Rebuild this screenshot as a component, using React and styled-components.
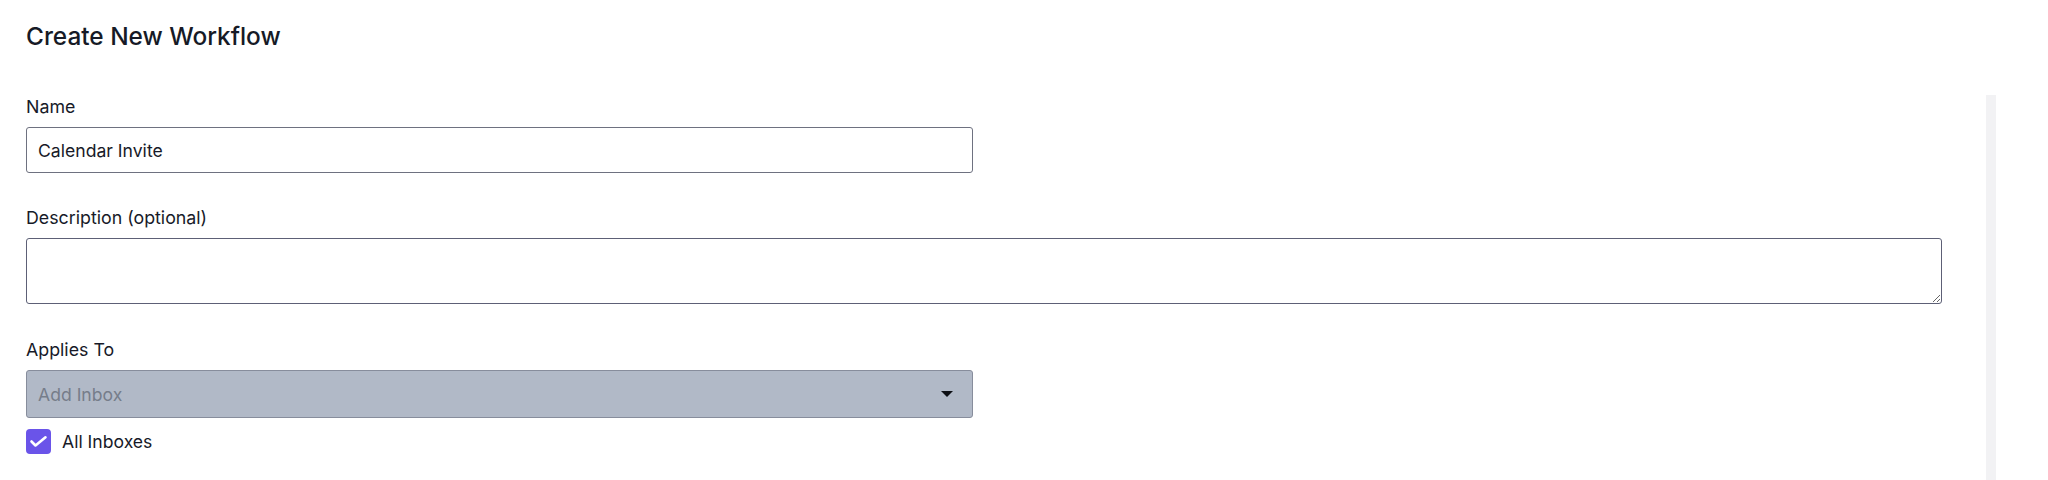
import React from 'react'
import styled, { createGlobalStyle } from 'styled-components'

const GlobalStyle = createGlobalStyle`
  html, body {
    margin: 0;
    padding: 0;
    background: #ffffff;
  }
  body {
    font-family: Inter, 'Noto Sans', sans-serif;
    color: #171a28;
  }
`

const Page = styled.div`
  width: 2048px;
  height: 480px;
  box-sizing: border-box;
  padding: 20px 0 0 26px;
  overflow: hidden;
`

const Title = styled.h1`
  margin: 0 0 43px;
  font-size: 24.4px;
  line-height: 32px;
  font-weight: 500;
  color: #161a26;
`

const Body = styled.div`
  display: flex;
  align-items: stretch;
  height: 385px;
`

const Form = styled.form`
  width: 1916px;
  display: flex;
  flex-direction: column;
`

const ScrollTrack = styled.div`
  width: 10px;
  margin-left: 44px;
  background: #f2f2f4;
`

const Field = styled.div`
  display: flex;
  flex-direction: column;
  margin-bottom: ${p => p.$gap || 33}px;
`

const Label = styled.label`
  font-size: 17.8px;
  line-height: 24px;
  color: #171a28;
  margin-bottom: 8px;
`

const TextInput = styled.input`
  box-sizing: border-box;
  width: 49.45%;
  height: 46px;
  padding: 0 11px;
  border: 1px solid #6e7180;
  border-radius: 3px;
  font-family: inherit;
  font-size: 17.6px;
  color: #171a28;
  background: #fff;
  outline: none;
`

const TextArea = styled.textarea`
  box-sizing: border-box;
  width: 100%;
  height: 66px;
  padding: 10px 11px;
  border: 1px solid #5d6076;
  border-radius: 3px;
  font-family: inherit;
  font-size: 17.6px;
  background: #fff;
  outline: none;
`

const Select = styled.div`
  box-sizing: border-box;
  width: 49.45%;
  height: 48px;
  padding: 0 19px 0 11px;
  display: flex;
  align-items: center;
  justify-content: space-between;
  border: 1px solid #878d9c;
  border-radius: 3px;
  background: #b1b9c7;
`

const Placeholder = styled.span`
  font-size: 17.6px;
  color: #767d8a;
`

const Arrow = styled.span`
  width: 0;
  height: 0;
  border-left: 6.5px solid transparent;
  border-right: 6.5px solid transparent;
  border-top: 6px solid #0d0f14;
`

const CheckRow = styled.label`
  display: flex;
  align-items: center;
  gap: 11px;
  margin-top: 11px;
  font-size: 17.6px;
  color: #171a28;
`

const Box = styled.span`
  width: 25px;
  height: 25px;
  border-radius: 4px;
  background: #6a54e9;
  display: flex;
  align-items: center;
  justify-content: center;
`

const App = () => (
  <>
    <GlobalStyle />
    <Page>
      <Title>Create New Workflow</Title>
      <Body>
        <Form>
          <Field>
            <Label>Name</Label>
            <TextInput defaultValue="Calendar Invite" />
          </Field>
          <Field $gap={34}>
            <Label>Description (optional)</Label>
            <TextArea />
          </Field>
          <Field $gap={0}>
            <Label>Applies To</Label>
            <Select>
              <Placeholder>Add Inbox</Placeholder>
              <Arrow />
            </Select>
            <CheckRow>
              <Box>
                <svg width="25" height="25" viewBox="0 0 25 25">
                  <polyline
                    points="5.5,12.5 9.5,16.5 19.5,8.3"
                    fill="none"
                    stroke="#fff"
                    strokeWidth="2.6"
                    strokeLinecap="round"
                    strokeLinejoin="round"
                  />
                </svg>
              </Box>
              All Inboxes
            </CheckRow>
          </Field>
        </Form>
        <ScrollTrack />
      </Body>
    </Page>
  </>
)

export default App
